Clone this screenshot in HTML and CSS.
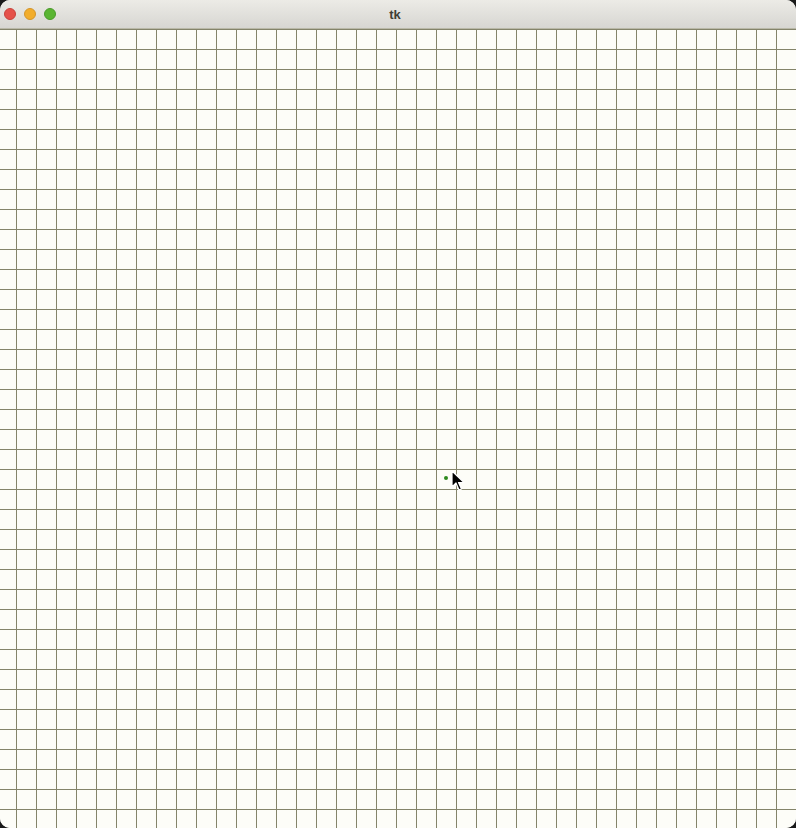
FILE: index.html
```html
<!DOCTYPE html>
<html lang="en">

<head>
    <meta charset="UTF-8">
    <meta name="viewport" content="width=device-width, initial-scale=1.0">
    <title>tk</title>

    <link rel="stylesheet" href="styles.css">
</head>

<body>
    <div class="window">
        <header class="titlebar">
            <div class="lights">
                <span class="light close"></span>
                <span class="light minimize"></span>
                <span class="light zoom"></span>
            </div>
            <h1 class="title">tk</h1>
        </header>

        <main class="canvas">
            <span class="dot"></span>
            <svg class="cursor" width="14" height="22" viewBox="0 0 14 22">
                <path d="M1 1 L1 17 L5 13 L8 20 L10.5 19 L7.5 12.5 L13 12.5 Z" fill="#000" stroke="#fff" stroke-width="1.2" stroke-linejoin="round" />
            </svg>
        </main>
    </div>
</body>

</html>
```

FILE: styles.css
```css
html,
body {
    margin: 0;
    height: 100%;
    background-color: #1a1a1a;
}

body {
    font-family: "Liberation Sans", Roboto, sans-serif;
}

.window {
    display: flex;
    flex-direction: column;
    height: 828px;
    border-radius: 10px;
    overflow: hidden;
    background-color: #fdfdf8;
}

.titlebar {
    position: relative;
    display: flex;
    align-items: center;
    justify-content: center;
    height: 28px;
    padding-right: 6px;
    flex: 0 0 auto;
    background: linear-gradient(to bottom, #ecebe6, #d7d6d2);
    border-bottom: 1px solid #b9b8a8;
}

.lights {
    position: absolute;
    left: 4px;
    top: 8px;
    display: flex;
    gap: 8px;
}

.light {
    width: 12px;
    height: 12px;
    border-radius: 50%;
    box-sizing: border-box;
}

.light.close {
    background-color: #e5524a;
    border: 1px solid #c8423b;
}

.light.minimize {
    background-color: #f2ad2b;
    border: 1px solid #d3952a;
}

.light.zoom {
    background-color: #5ab532;
    border: 1px solid #4a9a2a;
}

.title {
    margin: 0;
    font-size: 13px;
    font-weight: bold;
    color: #3f3f36;
}

.canvas {
    position: relative;
    flex: 1 1 auto;
    background-color: #fdfdf8;
    background-image:
        linear-gradient(to right, #84846a 1px, transparent 1px),
        linear-gradient(to bottom, #84846a 1px, transparent 1px);
    background-size: 20px 20px;
    background-position: 16px 0, 0 20px;
}

.dot {
    position: absolute;
    left: 444px;
    top: 447px;
    width: 4px;
    height: 4px;
    border-radius: 50%;
    background-color: #2e8a1e;
}

.cursor {
    position: absolute;
    left: 451px;
    top: 441px;
}
```
